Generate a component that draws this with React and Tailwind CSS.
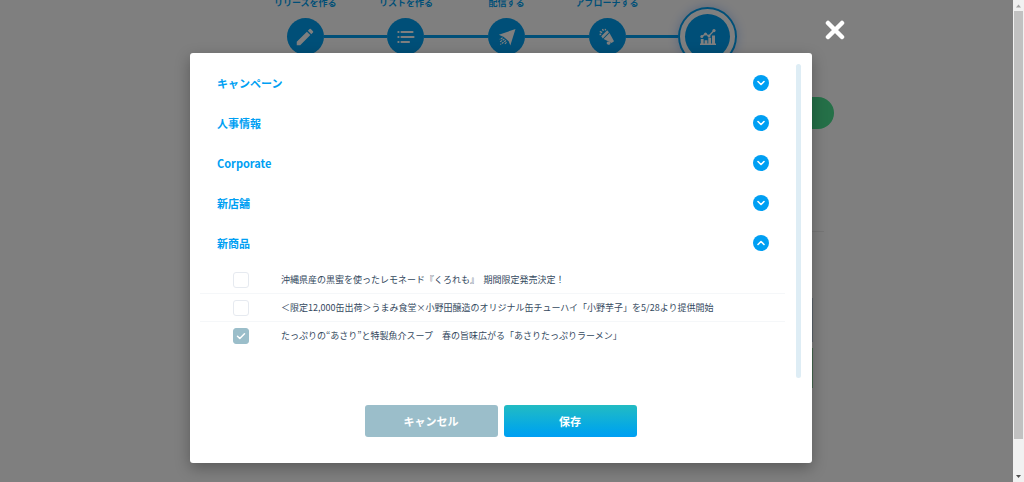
import { useState } from "react"
import { MdEdit } from "react-icons/md"

function ListIcon() {
  return (
    <svg viewBox="0 0 18 14" className="w-[18px] h-[14px]" fill="none" stroke="white" strokeWidth="2.200" strokeLinecap="round">
      <path d="M1.400 2h.1M1.400 7h.1M1.400 12h.1" />
      <path d="M4.500 2h11M4.500 7h12M4.500 12h7.500" />
    </svg>
  )
}

function PlaneIcon() {
  return (
    <svg viewBox="0 0 18 18" className="w-[18px] h-[18px]" fill="white">
      <path d="M17.500 1 .8 6.800l5 2.200 4.900 4.200 1.600 4.300z" />
      <path
        d="M4.600 9.700 1.800 11.500M6.400 10.900l-4.600 3.200M8 12.500l-5.600 4M8.600 14.400l-2.400 1.900"
        fill="none"
        stroke="white"
        strokeWidth="1.200"
        strokeDasharray="2.200 0.800"
      />
    </svg>
  )
}

function MegaphoneIcon() {
  return (
    <svg viewBox="0 0 18 18" className="w-[18px] h-[18px]" fill="white">
      <path d="M3.200 8.200 9.200 2.200l1.800 2-6.200 6.200z" />
      <path d="m5.600 11 5.900-5.900 4.500 8.100-2.400 1.900z" />
      <path d="M8.600 14.800a2 1.900 0 0 0 3.900.700l-.2-1.500-2.700-.600z" />
      <path d="m4.500 1 .9 1.900M1.800 3.300l2.300 1.300M1.600 6.500l1.600-.3M7.500.8l-.2 1.500" stroke="white" strokeWidth="1.400" />
    </svg>
  )
}

function ChartIcon() {
  return (
    <svg viewBox="0 0 18 18" className="w-[18px] h-[18px]" fill="white">
      <path d="M1 15.600h16v1.400H1zM1.800 11h2.800v4.800H1.800zM5.600 12.200h2.800v3.600H5.600zM9.300 9.800h2.800v6H9.300zM13 7.400h3v8.400h-3z" />
      <path d="M2.800 8.600 6.400 6l3.600 2L15 2.500" fill="none" stroke="white" strokeWidth="1.300" />
      <circle cx="2.800" cy="8.600" r="1.500" />
      <circle cx="6.500" cy="6" r="1.500" />
      <circle cx="10" cy="8" r="1.500" />
      <circle cx="15" cy="2.600" r="1.600" />
    </svg>
  )
}

const steps = [
  { label: "リリースを作る", icon: <MdEdit className="size-[22px] text-white" /> },
  { label: "リストを作る", icon: <ListIcon /> },
  { label: "配信する", icon: <PlaneIcon /> },
  { label: "アプローチする", icon: <MegaphoneIcon /> },
  { label: "", icon: <ChartIcon />, current: true },
]

const categories = [
  { name: "キャンペーン", items: [] },
  { name: "人事情報", items: [] },
  { name: "Corporate", items: [] },
  { name: "新店舗", items: [] },
  {
    name: "新商品",
    items: [
      "沖縄県産の黒蜜を使ったレモネード『くろれも』　期間限定発売決定！",
      "＜限定12,000缶出荷＞うまみ食堂×小野田醸造のオリジナル缶チューハイ「小野芋子」を5/28より提供開始",
      "たっぷりの“あさり”と特製魚介スープ　春の旨味広がる「あさりたっぷりラーメン」",
    ],
  },
]

function Stepper() {
  return (
    <ol className="grid grid-cols-5 w-[503px] max-w-full mx-auto">
      {steps.map((step, i) => (
        <li key={i} className="flex flex-col items-center">
          <span className="h-[6px] leading-[6px] text-[9px] font-bold text-[#009ff0] whitespace-nowrap">{step.label}</span>
          <div className="flex items-center w-full h-[61px]">
            <span className={i === 0 ? "flex-1" : "flex-1 h-[3px] bg-[#009ff0]"} />
            {step.current ? (
              <span className="shrink-0 size-[59px] rounded-full border-2 border-[#009ff0] flex items-center justify-center shadow-[0_0_12px_rgba(0,90,240,0.3)]">
                <span className="size-[45px] rounded-full bg-[#009ff0] flex items-center justify-center">{step.icon}</span>
              </span>
            ) : (
              <span className="shrink-0 size-[37px] rounded-full bg-[#009ff0] flex items-center justify-center">{step.icon}</span>
            )}
            <span className={step.current ? "flex-1" : "flex-1 h-[3px] bg-[#009ff0]"} />
          </div>
        </li>
      ))}
    </ol>
  )
}

function Chevron({ open }) {
  return (
    <span className="size-4 rounded-full bg-[#009ff3] flex items-center justify-center">
      <svg viewBox="0 0 8 6" className="w-2 h-[6px]" fill="none" stroke="white" strokeWidth="1.600" strokeLinecap="round" strokeLinejoin="round">
        <path d={open ? "M1 4.500 4 1.500l3 3" : "M1 1.500l3 3 3-3"} />
      </svg>
    </span>
  )
}

function ReleaseItem({ id, title, checked, onChange }) {
  return (
    <li className="flex items-center h-7 pl-[33px] border-b border-[#f5f7f9] last:border-b-0">
      <span className="grid size-4">
        <input
          id={id}
          type="checkbox"
          checked={checked}
          onChange={onChange}
          className="col-start-1 row-start-1 appearance-none size-4 rounded-[3px] border border-[#e6eaf0] checked:bg-[#9bbeca] checked:border-[#9bbeca]"
        />
        {checked && (
          <svg viewBox="0 0 16 16" className="col-start-1 row-start-1 size-4 pointer-events-none" fill="none" stroke="white" strokeWidth="1.500" strokeLinecap="round" strokeLinejoin="round">
            <path d="m4.500 8.300 2.300 2.200 4.700-4.700" />
          </svg>
        )}
      </span>
      <label htmlFor={id} className="pl-8 text-[9px] text-[#34495e] whitespace-nowrap">
        {title}
      </label>
    </li>
  )
}

function ReleaseModal() {
  const [openCategory, setOpenCategory] = useState("新商品")
  const [selected, setSelected] = useState([2])

  const toggle = (i) =>
    setSelected(selected.includes(i) ? selected.filter((n) => n !== i) : [...selected, i])

  return (
    <div role="dialog" className="flex-1 min-w-0 mt-[53px] pt-[10px] pb-[26px] pl-[10px] pr-[11px] bg-white rounded-[3px] shadow-[0_5px_15px_rgba(0,0,0,0.3)]">
      <div className="flex gap-[11px]">
        <div className="flex-1 min-w-0 min-h-[315px]">
          {categories.map((category) => (
            <section key={category.name}>
              <button
                type="button"
                onClick={() => setOpenCategory(category.name === openCategory ? "" : category.name)}
                className="flex items-center justify-between w-full h-10 pl-[17px] pr-4 text-[11px] font-bold text-[#009ff3]"
              >
                {category.name}
                <Chevron open={category.name === openCategory} />
              </button>
              {category.name === openCategory && (
                <ul className="pt-[3px]">
                  {category.items.map((title, i) => (
                    <ReleaseItem key={i} id={`release-${i}`} title={title} checked={selected.includes(i)} onChange={() => toggle(i)} />
                  ))}
                </ul>
              )}
            </section>
          ))}
        </div>
        <div className="w-[5px] mt-px rounded-full bg-[#deedf5]" />
      </div>
      <div className="flex justify-center gap-[6px] mt-[27px]">
        <button type="button" className="w-[133px] h-8 rounded-[3px] bg-[#9bbeca] text-[11px] font-bold text-white">
          キャンセル
        </button>
        <button type="button" className="w-[133px] h-8 rounded-[3px] bg-linear-to-b from-[#22bbc2] to-[#009ff3] text-[11px] font-bold text-white">
          保存
        </button>
      </div>
    </div>
  )
}

function WindowScrollbar() {
  return (
    <div className="w-[11px] shrink-0 flex flex-col items-center bg-[#f1f1f1]">
      <svg viewBox="0 0 11 11" className="size-[11px]" fill="#a3a3a3">
        <path d="M3 7.500 5.500 4.500 8 7.500z" />
      </svg>
      <div className="w-[9px] flex-1 bg-[#c1c1c1]" />
      <div className="h-8" />
      <svg viewBox="0 0 11 11" className="size-[11px]" fill="#505050">
        <path d="M3 4 5.500 7 8 4z" />
      </svg>
    </div>
  )
}

export default function App() {
  return (
    <div lang="ja" className="flex min-h-screen font-['Noto_Sans_CJK_JP','Noto_Sans',sans-serif]">
      <div className="relative flex-1 min-w-0 bg-white overflow-hidden">
        <Stepper />
        <div className="max-w-[654px] mx-auto">
          <div className="flex justify-end pt-[30px]">
            <span className="w-40 h-8 rounded-full bg-[#4ae090]" />
          </div>
          <div className="mt-[102px] mx-[10px] border-b border-[#ececec]" />
          <div className="mt-[66px] mx-[21px] h-11 bg-[#b8cbd8]" />
          <div className="mt-[6px] mx-[21px] h-10 bg-[#8fd0a0]" />
        </div>

        <div className="absolute inset-0 flex items-start pl-[190px] pr-[168px] bg-black/50">
          <ReleaseModal />
          <button type="button" aria-label="閉じる" className="shrink-0 mt-5 ml-[13px]">
            <svg viewBox="0 0 20 20" className="size-5" stroke="white" strokeWidth="4.500" strokeLinecap="round">
              <path d="M3 3l14 14M17 3 3 17" />
            </svg>
          </button>
        </div>
      </div>
      <WindowScrollbar />
    </div>
  )
}
